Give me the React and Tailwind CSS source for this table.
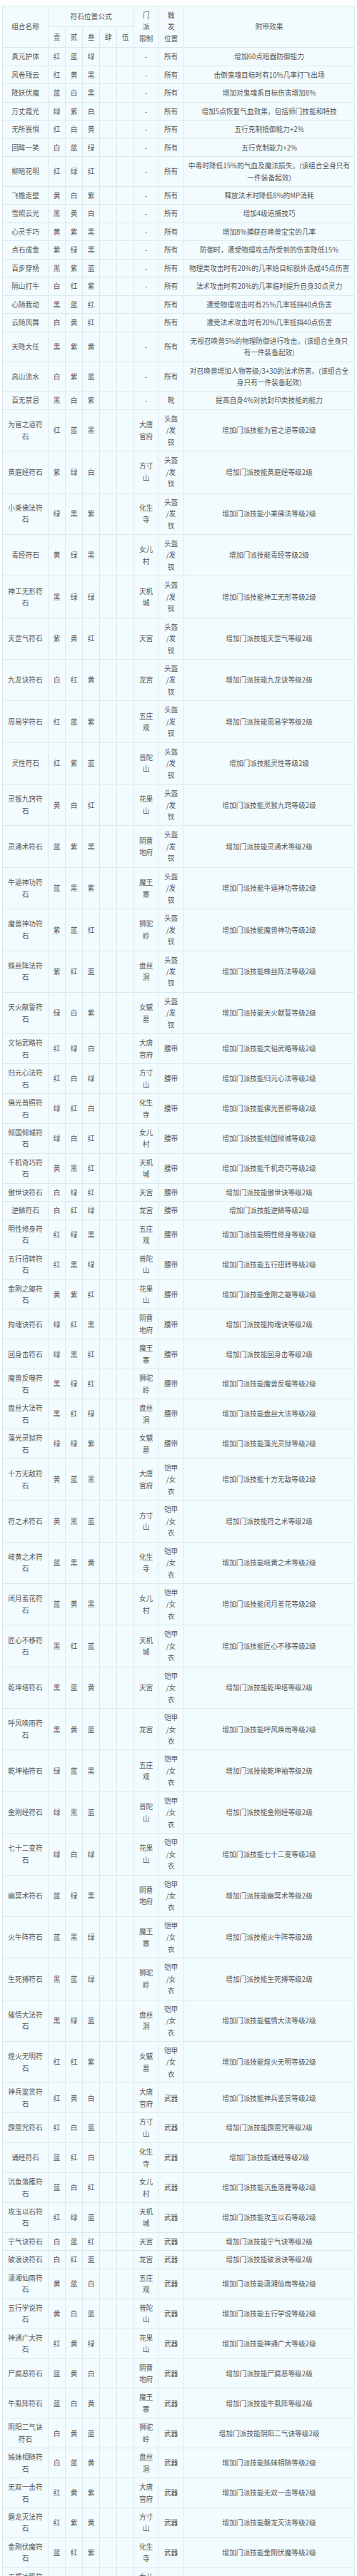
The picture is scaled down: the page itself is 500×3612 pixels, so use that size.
import React from 'react';

// 1. GENERAL COMBOS (shared by every slot)
const generalCombos = [
  ['真元护体', '红蓝绿', '-', '所有', '增加60点暗器防御能力'],
  ['风卷残云', '红黄黑', '-', '所有', '击倒鬼魂目标时有10%几率打飞出场'],
  ['降妖伏魔', '蓝白黑', '-', '所有', '增加对鬼魂系目标伤害增加8%'],
  ['万丈霞光', '绿紫白', '-', '所有', '增加5点恢复气血效果，包括师门技能和特技'],
  ['无所畏惧', '红白黄', '-', '所有', '五行克制抵御能力+2%'],
  ['回眸一笑', '白蓝绿', '-', '所有', '五行克制能力+2%'],
  ['柳暗花明', '红绿红', '-', '所有', '中毒时降低15%的气血及魔法损失。(该组合全身只有\n一件装备起效)'],
  ['飞檐走壁', '黄白紫', '-', '所有', '释放法术时降低8%的MP消耗'],
  ['雪照云光', '黑黄白', '-', '所有', '增加4级追捕技巧'],
  ['心灵手巧', '黄紫黑', '-', '所有', '增加8%捕获召唤兽宝宝的几率'],
  ['点石成金', '紫绿黑', '-', '所有', '防御时，遭受物理攻击所受到的伤害降低15%'],
  ['百步穿杨', '黑紫蓝', '-', '所有', '物理类攻击时有20%的几率给目标额外造成45点伤害'],
  ['隔山打牛', '白红紫', '-', '所有', '法术攻击时有20%的几率临时提升自身30点灵力'],
  ['心随我动', '黑蓝红', '', '所有', '遭受物理攻击时有25%几率抵挡40点伤害'],
  ['云随风舞', '白黄红', '', '所有', '遭受法术攻击时有20%几率抵挡40点伤害'],
  ['天降大任', '黑紫黄', '-', '所有', '无视召唤兽5%的物理防御进行攻击。(该组合全身只\n有一件装备起效)'],
  ['高山流水', '白紫蓝', '-', '所有', '对召唤兽增加人物等级/3+30的法术伤害。(该组合全\n身只有一件装备起效)'],
  ['百无禁忌', '黑白紫', '-', '靴', '提高自身4%对抗封印类技能的能力'],
];

// 2. SCHOOL SKILL COMBOS, grouped by slot
const schoolCombos = [
  ['头盔\n/发\n钗', [
    ['为官之道', '红蓝黑', '大唐官府'], ['黄庭经', '紫绿白', '方寸山'], ['小乘佛法', '绿黑紫', '化生寺'],
    ['毒经', '黄绿黑', '女儿村'], ['神工无形', '黑绿绿', '天机城'], ['天罡气', '紫黄红', '天宫'],
    ['九龙诀', '白红黄', '龙宫'], ['周易学', '红蓝紫', '五庄观'], ['灵性', '红紫蓝', '普陀山'],
    ['灵猴九窍', '黄白红', '花果山'], ['灵通术', '蓝紫黑', '阴曹地府'], ['牛逼神功', '蓝黑紫', '魔王寨'],
    ['魔兽神功', '紫蓝红', '狮驼岭'], ['蛛丝阵法', '紫红蓝', '盘丝洞'], ['天火献誓', '绿白紫', '女魃墓'],
  ]],
  ['腰带', [
    ['文韬武略', '红绿白', '大唐官府'], ['归元心法', '红白绿', '方寸山'], ['佛光普照', '绿红白', '化生寺'],
    ['倾国倾城', '绿白红', '女儿村'], ['千机奇巧', '黄黑红', '天机城'], ['傲世诀', '白绿红', '天宫'],
    ['逆鳞', '白红绿', '龙宫'], ['明性修身', '红绿黑', '五庄观'], ['五行扭转', '红黑绿', '普陀山'],
    ['金刚之躯', '黄紫红', '花果山'], ['拘魂诀', '绿红黑', '阴曹地府'], ['回身击', '绿黑红', '魔王寨'],
    ['魔兽反噬', '黑绿红', '狮驼岭'], ['盘丝大法', '黑红绿', '盘丝洞'], ['藻光灵狱', '绿绿紫', '女魃墓'],
  ]],
  ['铠甲\n/女\n衣', [
    ['十方无敌', '黄蓝黑', '大唐官府'], ['符之术', '黄黑蓝', '方寸山'], ['岐黄之术', '蓝黑黄', '化生寺'],
    ['闭月羞花', '蓝黄黑', '女儿村'], ['匠心不移', '黑红蓝', '天机城'], ['乾坤塔', '黑蓝黄', '天宫'],
    ['呼风唤雨', '黑黄蓝', '龙宫'], ['乾坤袖', '绿蓝黑', '五庄观'], ['金刚经', '绿黑蓝', '普陀山'],
    ['七十二变', '绿白绿', '花果山'], ['幽冥术', '蓝绿黑', '阴曹地府'], ['火牛阵', '蓝黑绿', '魔王寨'],
    ['生死搏', '黑蓝绿', '狮驼岭'], ['催情大法', '黑绿蓝', '盘丝洞'], ['煌火无明', '红红紫', '女魃墓'],
  ]],
  ['武器', [
    ['神兵鉴赏', '红黄白', '大唐官府'], ['霹雳咒', '红白蓝', '方寸山'], ['诵经', '蓝红白', '化生寺'],
    ['沉鱼落雁', '蓝白红', '女儿村'], ['攻玉以石', '红绿蓝', '天机城'], ['宁气诀', '白蓝红', '天宫'],
    ['破浪诀', '白红蓝', '龙宫'], ['潇湘仙雨', '黄蓝白', '五庄观'], ['五行学说', '黄白蓝', '普陀山'],
    ['神通广大', '红黄绿', '花果山'], ['尸腐恶', '蓝黄白', '阴曹地府'], ['牛虱阵', '蓝白黄', '魔王寨'],
    ['阴阳二气诀', '白黄蓝', '狮驼岭'], ['姊妹相随', '白蓝黄', '盘丝洞'], ['无双一击', '红黄紫', '大唐官府'],
    ['磐龙灭法', '红紫黄', '方寸山'], ['金刚伏魔', '蓝红紫', '化生寺'], ['玉质冰肌', '绿红白', '女儿村'],
  ]],
];

// chop text into lines of n characters (the cells wrap this way)
const chop = (text, n) => (text.match(new RegExp(`.{1,${n}}`, 'g')) || ['']).join('\n');

const rows = [
  ...generalCombos,
  ...schoolCombos.flatMap(([slot, list]) =>
    list.map(([skill, stones, school]) => [
      chop(`${skill}符石`, 5),
      stones,
      chop(school, 2),
      slot,
      `增加门派技能${skill}等级2级`,
    ])
  ),
];

const cell = 'border border-[#dbe9ef] px-[5px] py-[4px] text-center align-middle whitespace-pre font-normal';

const RuneTable = () => {
  return (
    <div className="min-h-screen bg-white pt-[8px] px-[3px] font-['Noto_Sans_CJK_SC','Noto_Sans',sans-serif]">
      <table className="w-[494px] table-fixed border-collapse bg-[#f2fbfe] text-[9.7px] leading-[16.45px] text-[#575757]">
        <colgroup>
          <col className="w-[64px]" />
          <col className="w-[24px]" />
          <col className="w-[24px]" />
          <col className="w-[24px]" />
          <col className="w-[24px]" />
          <col className="w-[24px]" />
          <col className="w-[34px]" />
          <col className="w-[36px]" />
          <col />
        </colgroup>

        {/* HEADER */}
        <thead>
          <tr>
            <th rowSpan={2} className={cell}>组合名称</th>
            <th colSpan={5} className={cell}>符石位置公式</th>
            <th rowSpan={2} className={cell}>{'门\n派\n限制'}</th>
            <th rowSpan={2} className={cell}>{'触\n发\n位置'}</th>
            <th rowSpan={2} className={cell}>附带效果</th>
          </tr>
          <tr>
            {['壹', '贰', '叁', '肆', '伍'].map((n) => (
              <th key={n} className={cell}>{n}</th>
            ))}
          </tr>
        </thead>

        {/* BODY */}
        <tbody>
          {rows.map(([name, stones, school, slot, effect], i) => (
            <tr key={i}>
              <td className={cell}>{name}</td>
              {[0, 1, 2, 3, 4].map((k) => (
                <td key={k} className={cell}>{stones[k] || ''}</td>
              ))}
              <td className={cell}>{school}</td>
              <td className={cell}>{slot}</td>
              <td className={cell}>{effect}</td>
            </tr>
          ))}
        </tbody>
      </table>
    </div>
  );
};

export default RuneTable;
